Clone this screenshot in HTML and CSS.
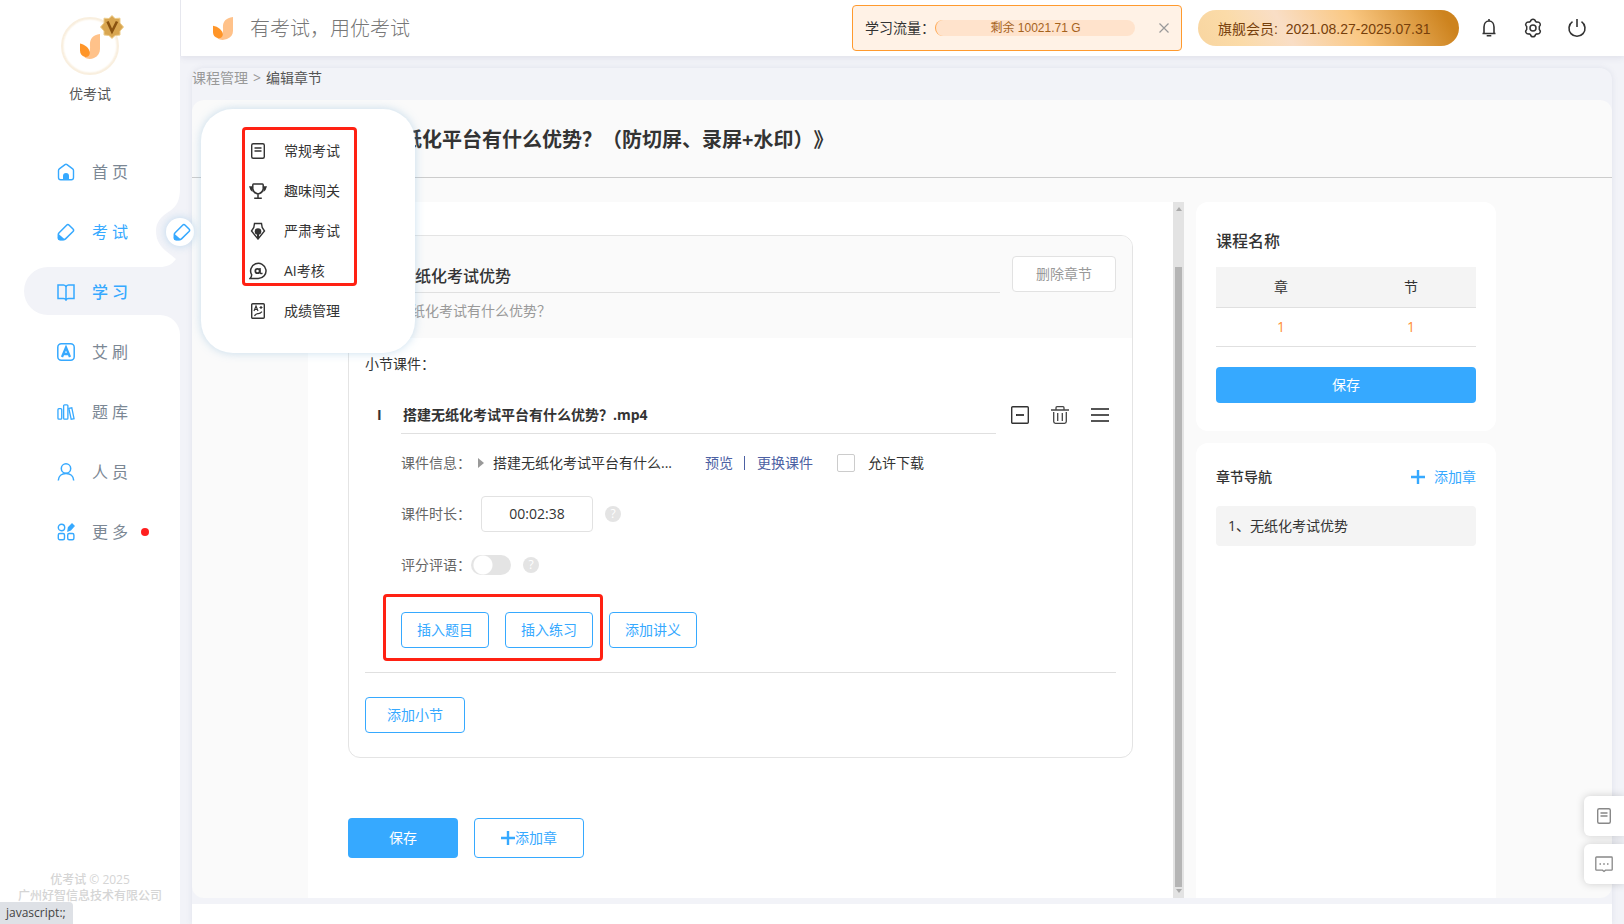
FILE: index.html
```html
<!DOCTYPE html>
<html lang="zh-CN">
<head>
<meta charset="utf-8">
<title>编辑章节 - 优考试</title>
<meta name="viewport" content="width=device-width, initial-scale=1">
<link rel="stylesheet" href="styles.css">
</head>
<body>
<svg class="defs" width="0" height="0" aria-hidden="true">
  <symbol id="i-logo" viewBox="0 0 20 25">
    <path d="M20 0C12 1 9.500 6 10 12C10.500 17 8.500 21 4.500 23.500C7 25.200 11 25.300 14 24C18 22.300 20 19 20 15Z" fill="#ffc28a"/>
    <path d="M0 9.500C5 10.500 9.500 14 9.800 19C9.800 21.500 7.500 23.500 5 23C1.500 22 0 19.500 0 16.500Z" fill="#ff9528"/>
  </symbol>
  <symbol id="i-eraser" viewBox="0 0 18 18">
    <path d="M9.600 2.200Q10.900 .9 12.200 2.200L16 6Q17.200 7.200 16 8.500L8.500 15.900Q7.700 16.700 6.300 16.700H3.200Q1.300 16.700 1.300 14.500V11.600Q1.300 10.500 2.100 9.700Z" fill="none" stroke="#36a9ff" stroke-width="1.500"/>
    <path d="M1.300 10.800L8 16.500Q7.500 17.200 6 17.200H3Q.8 17.200 .8 15Z" fill="#36a9ff"/>
  </symbol>
  <symbol id="i-doc" viewBox="0 0 18 18" fill="none" stroke="currentColor">
    <rect x="2.700" y="1.700" width="12.600" height="14.600" rx="1.500" stroke-width="1.400"/>
    <path d="M5.500 6H12.500M5.500 9H12.500" stroke-width="1.300"/>
  </symbol>
  <symbol id="i-plus" viewBox="0 0 14 14">
    <path d="M7 0V14M0 7H14" stroke="#36a9ff" stroke-width="2.400"/>
  </symbol>
</svg>

<div class="shell">
  <aside class="sidebar">
    <svg class="notch" width="158" height="152" viewBox="24 188 158 152" aria-hidden="true">
      <path d="M182 188H180C180 200 177 206 170 211C160 217 156 223 156 231C156 240 160 246 166 251L176 259C172 265 166 267 160 267H48A24 24 0 0 0 48 315H160A20 20 0 0 1 180 335V340H182Z" fill="#f2f3f8"/>
    </svg>
    <div class="avatar">
      <svg width="20" height="25"><use href="#i-logo"/></svg>
      <svg class="badge" width="24" height="24" viewBox="0 0 24 24" aria-hidden="true">
        <path d="M12 .5L15 3.500L20 3.200L20 8L23.500 12L20 16L20 20L15 20.500L12 23.500L9 20.500L4 20L4 16L.5 12L4 8L4 3.200L9 3.500Z" fill="#d9a650" stroke="#edcd8c"/>
        <path d="M7.500 6.500L12 16.500L17 6.500" fill="none" stroke="#8a5310" stroke-width="2.600"/>
      </svg>
    </div>
    <div class="username">优考试</div>
    <nav class="nav">
      <a href="#"><svg width="18" height="18" viewBox="0 0 18 18"><path d="M1.500 7.500Q1.500 6.500 2.300 5.900L8 1.600Q9 .9 10 1.600L15.700 5.900Q16.500 6.500 16.500 7.500V14.500Q16.500 16.700 14.300 16.700H3.700Q1.500 16.700 1.500 14.500Z" fill="none" stroke="#36a9ff" stroke-width="1.400"/><path d="M6 17V13A3 3 0 0 1 12 13V17Z" fill="#36a9ff"/></svg>首页</a>
      <a href="#" class="on"><svg width="18" height="18"><use href="#i-eraser"/></svg>考试</a>
      <a href="#" class="on current"><svg width="18" height="18" viewBox="0 0 18 18" fill="none" stroke="#36a9ff" stroke-width="1.500"><path d="M9 4Q8.500 2 6.500 2H1V15.500H6.500Q8.500 15.500 9 17Q9.500 15.500 11.500 15.500H17V2H11.500Q9.500 2 9 4V16.500"/></svg>学习</a>
      <a href="#"><svg width="18" height="18" viewBox="0 0 18 18"><rect x=".8" y=".8" width="16.400" height="16.400" rx="3.500" fill="none" stroke="#36a9ff" stroke-width="1.500"/><path d="M5 14L9 4.500L13 14M6.500 11H11.500" fill="none" stroke="#36a9ff" stroke-width="2.300"/></svg>艾刷</a>
      <a href="#"><svg width="19" height="18" viewBox="0 0 19 18" fill="none" stroke="#36a9ff" stroke-width="1.400"><rect x="1" y="5.500" width="4" height="11" rx="1"/><rect x="7" y="1.500" width="4.500" height="15" rx="1"/><path d="M12.500 5.200L15.600 4.500L18 16L15 16.700Z"/></svg>题库</a>
      <a href="#"><svg width="18" height="18" viewBox="0 0 18 18" fill="none" stroke="#36a9ff" stroke-width="1.500"><circle cx="9" cy="5.500" r="4.700"/><path d="M1.300 17.500C1.500 13 4.800 10.500 9 10.500S16.500 13 16.700 17.500"/></svg>人员</a>
      <a href="#"><svg width="18" height="18" viewBox="0 0 18 18" fill="none" stroke="#36a9ff" stroke-width="1.400"><circle cx="4.500" cy="4.500" r="3.200"/><rect x="1.300" y="10.500" width="6.200" height="6.200" rx="1.500"/><rect x="10.700" y="10.500" width="6.200" height="6.200" rx="1.500"/><path d="M11 7.800L11.500 4.500L15 1L17 3L13.500 6.800Z" fill="#36a9ff"/></svg>更多<i class="dot"></i></a>
    </nav>
    <div class="copyright">优考试 © 2025<br>广州好智信息技术有限公司</div>
  </aside>

  <div class="main">
    <header class="topbar">
      <svg class="topbar-logo" width="20" height="23" viewBox="0 0 20 25" preserveAspectRatio="none"><use href="#i-logo"/></svg>
      <span class="slogan">有考试，用优考试</span>
      <div class="traffic">
        <span>学习流量：</span>
        <span class="meter">剩余 10021.71 G</span>
        <button class="close" aria-label="关闭"><svg width="10" height="10" viewBox="0 0 10 10"><path d="M.5 .5L9.500 9.500M9.500 .5L.5 9.500" stroke="#999" stroke-width="1.200"/></svg></button>
      </div>
      <div class="vip">旗舰会员:&nbsp; 2021.08.27-2025.07.31</div>
      <div class="tools">
        <button aria-label="通知"><svg width="20" height="20" viewBox="0 0 20 20" fill="none" stroke="#333" stroke-width="1.600"><path d="M10 1V3M3.500 15.500H16.500M5 15.500V9C5 5.500 7 3 10 3S15 5.500 15 9V15.500M7.700 17.700H12.300" /></svg></button>
        <button aria-label="设置"><svg width="20" height="20" viewBox="0 0 20 20" fill="none" stroke="#333" stroke-width="1.500" stroke-linejoin="round"><path d="M7.400 3.500Q8 1.200 10 1.200T12.600 3.500L13.800 4.200Q16 3.700 17 5.300T16.300 8.600V11.400Q18 13.100 17 14.700T13.800 15.800L12.600 16.500Q12 18.800 10 18.800T7.400 16.500L6.200 15.800Q4 16.300 3 14.700T3.700 11.400V8.600Q2 6.900 3 5.300T6.200 4.200Z"/><circle cx="10" cy="10" r="3"/></svg></button>
        <button aria-label="退出"><svg width="20" height="20" viewBox="0 0 20 20" fill="none" stroke="#333" stroke-width="1.600"><path d="M5.500 3.700A8 8 0 1 0 14.500 3.700M10 1V9"/></svg></button>
      </div>
    </header>

    <div class="page">
      <div class="crumbs"><a href="#">课程管理</a><span>&gt;</span><b>编辑章节</b></div>
      <div class="panel">
        <h1 class="title">《搭建无纸化平台有什么优势？（防切屏、录屏+水印）》</h1>
        <div class="columns">
          <main class="scroller">
            <section class="chapter">
              <div class="chapter-head">
                <div class="chapter-row">
                  <h2 class="chapter-name">无纸化考试优势</h2>
                  <button class="btn-plain">删除章节</button>
                </div>
                <p class="chapter-desc">无纸化考试有什么优势？</p>
              </div>
              <div class="chapter-body">
                <div class="label-line">小节课件：</div>
                <div class="lesson-row">
                  <span class="index">I</span>
                  <h3 class="lesson-name">搭建无纸化考试平台有什么优势？.mp4</h3>
                  <div class="lesson-tools">
                    <button aria-label="收起"><svg width="18" height="18" viewBox="0 0 18 18"><rect x=".7" y=".7" width="16.600" height="16.600" rx="1" fill="none" stroke="#333" stroke-width="1.400"/><path d="M5 9H13" stroke="#333" stroke-width="1.800"/></svg></button>
                    <button aria-label="删除"><svg width="18" height="18" viewBox="0 0 18 18" fill="none" stroke="#444" stroke-width="1.300"><path d="M0 4H18M5 4V1.700Q5 .7 6 .7H12Q13 .7 13 1.700V4M2.700 6V15.500Q2.700 17.300 4.500 17.300H13.500Q15.300 17.300 15.300 15.500V6M6.700 7V15M11.300 7V15"/></svg></button>
                    <button aria-label="排序"><svg width="18" height="18" viewBox="0 0 18 18"><path d="M0 3H18M0 9H18M0 15H18" stroke="#555" stroke-width="1.800"/></svg></button>
                  </div>
                </div>
                <div class="fields">
                  <div class="field">
                    <span>课件信息：</span><i class="tri"></i><span class="file">搭建无纸化考试平台有什么...</span>
                    <a href="#" class="preview">预览</a><i class="bar"></i><a href="#">更换课件</a>
                    <label class="allow"><input type="checkbox" class="check">允许下载</label>
                  </div>
                  <div class="field">
                    <label for="dur">课件时长：</label><input id="dur" class="duration" type="text" value="00:02:38"><i class="help">?</i>
                  </div>
                  <div class="field">
                    <label for="cmt">评分评语：</label><input id="cmt" class="switch" type="checkbox"><i class="help">?</i>
                  </div>
                  <div class="inserts">
                    <i class="mark mark-inserts"></i>
                    <button class="btn-line">插入题目</button>
                    <button class="btn-line">插入练习</button>
                    <button class="btn-line">添加讲义</button>
                  </div>
                </div>
                <div class="chapter-foot"><button class="btn-line wide">添加小节</button></div>
              </div>
            </section>
            <div class="actions">
              <button class="btn-fill">保存</button>
              <button class="btn-line big"><svg width="14" height="14"><use href="#i-plus"/></svg>添加章</button>
            </div>
          </main>
          <div class="track" aria-hidden="true"><i class="arrow up"></i><i class="thumb"></i><i class="arrow down"></i></div>
          <aside class="side">
            <section class="box">
              <h2 class="box-title">课程名称</h2>
              <table class="stats">
                <thead><tr><th>章</th><th>节</th></tr></thead>
                <tbody><tr><td>1</td><td>1</td></tr></tbody>
              </table>
              <button class="btn-fill full">保存</button>
            </section>
            <section class="box outline">
              <div class="outline-head"><h2>章节导航</h2><a href="#"><svg width="14" height="14"><use href="#i-plus"/></svg>添加章</a></div>
              <a href="#" class="outline-item">1、无纸化考试优势</a>
            </section>
          </aside>
        </div>
      </div>
      <div class="below"></div>
    </div>
  </div>
</div>

<div class="knob"><svg width="18" height="18"><use href="#i-eraser"/></svg></div>
<div class="submenu">
  <i class="mark mark-menu"></i>
  <a href="#"><svg width="18" height="18"><use href="#i-doc"/></svg>常规考试</a>
  <a href="#"><svg width="18" height="18" viewBox="0 0 18 18"><path d="M4.500 2H13.500Q14.200 2 14.200 3V7Q13.500 11 9 12Q4.500 11 3.800 7V3Q3.800 2 4.500 2ZM9 12V15.700M5.200 16.300H12.800" fill="none" stroke="#333" stroke-width="1.500"/><path d="M0 4.200H3.500V10Q1 8.500 0 4.200ZM18 4.200H14.500V10Q17 8.500 18 4.200Z" fill="#333"/></svg>趣味闯关</a>
  <a href="#"><svg width="18" height="18" viewBox="0 0 18 18"><path d="M5.500 1.500H12.500L13.200 5.500L15.500 9L9 17L2.500 9L4.800 5.500Z" fill="none" stroke="#333" stroke-width="1.400"/><circle cx="9" cy="9.500" r="3.300" fill="#333"/><path d="M9 10V17" stroke="#333" stroke-width="2"/></svg>严肃考试</a>
  <a href="#"><svg width="18" height="18" viewBox="0 0 18 18" fill="none" stroke="#333" stroke-width="1.500"><path d="M1 16.500H9.300A7.700 7.600 0 1 0 2.700 12.800Q2.700 15 1 16.500Z"/><circle cx="8.500" cy="9" r="2.200" stroke-width="1.800"/><path d="M11 6V10.500Q11.500 12 13.500 11.300" /></svg>AI考核</a>
  <a href="#"><svg width="18" height="18" viewBox="0 0 18 18" fill="none" stroke="#333"><rect x="2.700" y="1.700" width="12.600" height="14.600" rx="1" stroke-width="1.400"/><path d="M5 9L7 4L9 9M5.700 7.500H8.300M10.500 5.500H13.500M12 4V7M5.500 14Q7 11.500 9 11.700T13 9.700" stroke-width="1.200"/></svg>成绩管理</a>
</div>

<div class="floaters">
  <button aria-label="文档"><svg width="18" height="18"><use href="#i-doc"/></svg></button>
  <button aria-label="反馈"><svg width="18" height="18" viewBox="0 0 18 18" fill="none" stroke="currentColor" stroke-width="1.300"><path d="M1.500 2H16.500Q17.200 2 17.200 2.700V14.500Q17.200 15.200 16.500 15.200H10.500L9 16.500L7.500 15.200H1.500Q.8 15.200 .8 14.500V2.700Q.8 2 1.500 2Z"/><path d="M4.500 9H6M8.200 9H9.800M12 9H13.500" stroke-width="1.600"/></svg></button>
</div>
<div class="status">javascript:;</div>
</body>
</html>
```

FILE: styles.css
```css
* { box-sizing: border-box; }
html, body { margin: 0; }
body {
  font: 14px/20px "Open Sans", "Noto Sans CJK SC", sans-serif;
  color: #333;
  background: #f2f3f8;
  text-spacing-trim: space-all;
}
h1, h2, h3, p { margin: 0; font-size: 14px; }
a { color: inherit; text-decoration: none; }
button { font: inherit; color: inherit; padding: 0; border: 0; background: none; cursor: pointer; }
svg { display: block; flex: none; }
i { font-style: normal; }
.defs { position: absolute; }

.shell { display: flex; min-height: 100vh; }

/* sidebar */
.sidebar {
  position: relative;
  flex: 0 0 180px;
  display: flex;
  flex-direction: column;
  align-items: center;
  padding: 17px 0 20px;
  background: #fff;
}
.notch { position: absolute; left: 24px; top: 188px; }
.avatar {
  position: relative;
  display: flex;
  align-items: center;
  justify-content: center;
  width: 58px;
  height: 58px;
  border: 2px solid #f9efdf;
  border-radius: 50%;
  box-shadow: inset 0 0 2px #f5e2c4;
}
.badge { position: absolute; right: -7px; top: -4px; }
.username { margin-top: 9px; color: #555; }
.nav { position: relative; width: 100%; margin-top: 38px; }
.nav a {
  display: flex;
  align-items: center;
  gap: 17px;
  height: 60px;
  padding-left: 57px;
  font-size: 16px;
  letter-spacing: 4px;
  color: #7b8794;
}
.nav a.on { color: #36a9ff; }
.nav a.current { font-weight: 500; }
.nav svg { width: 18px; }
.dot { width: 8px; height: 8px; margin-left: -8px; border-radius: 50%; background: #ff1f1f; }
.copyright {
  margin-top: auto;
  font-size: 12px;
  line-height: 16px;
  font-weight: 500;
  text-align: center;
  color: #d5d5d5;
}

/* top bar */
.main { flex: 1; min-width: 0; display: flex; flex-direction: column; }
.topbar {
  display: flex;
  align-items: center;
  height: 56px;
  padding: 0 37px 0 32px;
  background: #fff;
  border-left: 1px solid #e6e7ee;
  box-shadow: 0 2px 6px rgba(100, 100, 140, .12);
}
.slogan { margin-left: 17px; padding-top: 2px; font-size: 20px; font-weight: 300; line-height: 28px; color: #777; }
.traffic {
  display: flex;
  align-items: center;
  width: 330px;
  height: 46px;
  margin-left: auto;
  padding: 0 12px;
  border: 1px solid #ff9a2e;
  border-radius: 4px;
  background: #fff2e6;
}
.meter {
  flex: none;
  width: 200px;
  height: 16px;
  border-radius: 8px;
  border-left: 1px solid #ffa64d;
  background: #ffe3cc;
  font: 12px/16px "Liberation Sans", "Noto Sans CJK SC", sans-serif;
  text-align: center;
  color: #a5621c;
}
.close { margin-left: auto; }
.vip {
  flex: none;
  width: 261px;
  height: 36px;
  margin-left: 16px;
  padding: 1px 0 0 20px;
  border-radius: 18px;
  background: linear-gradient(60deg, #f8d5a0, #fbdba8 16%, #f9dec6 34%, #fac883 60%, #cd831e 94%);
  font: 14px/36px "Liberation Sans", "Noto Sans CJK SC", sans-serif;
  color: #77400b;
}
.tools { display: flex; gap: 24px; margin-left: 20px; }

/* page */
.page { flex: 1; display: flex; flex-direction: column; margin: 12px 12px 0; border-radius: 12px 12px 0 0; box-shadow: 0 0 6px rgba(100, 110, 150, .13); }
.crumbs { display: flex; gap: 5px; height: 32px; color: #999; }
.crumbs b { font-weight: 400; color: #555; }
.panel { flex: 1; display: flex; flex-direction: column; border-radius: 12px; background: #fafafa; }
.title {
  padding: 25px 16px 22px 130px;
  border-bottom: 1px solid #ccc;
  font-size: 20px;
  line-height: 30px;
}
.columns { flex: 1; display: flex; width: 100%; max-width: 1188px; margin: 0 auto; padding-top: 24px; }
.scroller { flex: 1; min-width: 0; padding: 33px 40px 40px; background: #fff; }
.below { height: 20px; margin-top: 6px; background: #fff; }

.chapter { border: 1px solid #e4e4e4; border-radius: 12px; overflow: hidden; }
.chapter-head { height: 102px; padding: 20px 16px 0 15px; background: #fafafa; }
.chapter-row { display: flex; gap: 12px; }
.chapter-name {
  flex: 1;
  padding: 8px 0 4px 35px;
  border-bottom: 1px solid #e0e0e0;
  font-size: 16px;
  line-height: 24px;
  font-weight: 500;
}
.chapter-desc { padding: 8px 0 0 33px; font-weight: 400; color: #999; }
.btn-plain { width: 104px; height: 36px; border: 1px solid #e2e2e2; border-radius: 4px; background: #fff; color: #999; }
.chapter-body { padding: 16px 16px 24px; }
.lesson-row { display: flex; margin-top: 24px; }
.index { width: 36px; padding: 7px 0 0 12px; font-weight: 700; }
.lesson-name { flex: 1; padding: 7px 2px 8px; border-bottom: 1px solid #e0e0e0; font-weight: 700; }
.lesson-tools { display: flex; gap: 22px; align-items: center; margin: 0 7px 2px 15px; }
.fields { padding: 11px 0 24px 36px; border-bottom: 1px solid #e0e0e0; }
.field { display: flex; align-items: center; height: 36px; margin-bottom: 15px; color: #666; }
.field a { color: #4c61a3; }
.tri { margin-left: 7px; border: 5px solid transparent; border-left: 6px solid #999; border-right: 0; }
.file { margin-left: 9px; color: #333; }
.field .preview { margin-left: 33px; }
.bar { width: 1px; height: 14px; margin: 0 12px 0 11px; background: #4c61a3; }
.allow { display: flex; align-items: center; margin-left: 24px; color: #333; }
.check { appearance: none; width: 18px; height: 18px; margin: 0 13px 0 0; border: 1px solid #ccc; border-radius: 2px; background: #fff; }
.duration {
  width: 112px;
  height: 36px;
  margin: 0 0 0 10px;
  padding: 0 2px 2px;
  border: 1px solid #e2e2e2;
  border-radius: 4px;
  font: inherit;
  color: #333;
  text-align: center;
}
.help {
  width: 16px;
  height: 16px;
  margin-left: 12px;
  border-radius: 50%;
  background: #e4e4e4;
  font-size: 12px;
  line-height: 16px;
  text-align: center;
  color: #fff;
}
.duration + .help { margin-left: 12px; }
.switch {
  appearance: none;
  width: 40px;
  height: 20px;
  margin: 0;
  border-radius: 10px;
  background: radial-gradient(circle at 12px 10px, #fff 9px, #e4e4e4 10px);
}
.inserts { position: relative; display: flex; gap: 16px; padding-top: 14px; }
.btn-line {
  display: flex;
  align-items: center;
  justify-content: center;
  width: 88px;
  height: 36px;
  border: 1px solid #36a9ff;
  border-radius: 4px;
  background: #fff;
  color: #36a9ff;
}
.btn-line.wide { width: 100px; }
.btn-line.big { width: 110px; height: 40px; }
.btn-fill { width: 110px; height: 40px; border-radius: 4px; background: #36a9ff; color: #fff; }
.btn-fill.full { width: 100%; height: 36px; }
.chapter-foot { padding-top: 24px; }
.actions { display: flex; gap: 16px; margin-top: 60px; }

.mark { position: absolute; border: 3px solid #ff2113; border-radius: 4px; pointer-events: none; }
.mark-inserts { left: -18px; top: -4px; width: 220px; height: 67px; }
.mark-menu { left: 41px; top: 18px; width: 115px; height: 159px; }

.track { display: flex; flex-direction: column; align-items: center; width: 11px; padding: 5px 0; background: #e3e3e3; }
.arrow { border: 3px solid transparent; }
.up { border-top: 0; border-bottom: 4px solid #aaa; }
.down { border-bottom: 0; border-top: 4px solid #aaa; }
.thumb { flex: 1; width: 7px; margin: 56px 0 2px; background: #b5b5b5; }

/* right column */
.side { display: flex; flex-direction: column; gap: 12px; width: 300px; margin-left: 12px; }
.box { padding: 28px 20px; border-radius: 12px; background: #fff; }
.box-title { margin-bottom: 14px; font-size: 16px; font-weight: 500; line-height: 23px; }
.stats { width: 100%; margin-bottom: 20px; border-collapse: collapse; table-layout: fixed; }
.stats th, .stats td { height: 40px; padding: 0; border-bottom: 1px solid #e0e0e0; text-align: center; font-weight: 400; }
.stats th { background: #f4f4f4; }
.stats td { height: 39px; color: #ff8f33; }
.outline { flex: 1; padding-top: 24px; border-radius: 12px 12px 0 0; }
.outline-head { display: flex; justify-content: space-between; color: #36a9ff; }
.outline-head h2 { font-weight: 500; color: #333; }
.outline-head a { display: flex; align-items: center; gap: 9px; }
.outline-item { display: block; margin-top: 19px; padding: 10px 12px; border-radius: 4px; background: #f4f4f4; }

/* overlays */
.knob {
  position: absolute;
  left: 166px;
  top: 218px;
  display: flex;
  align-items: center;
  justify-content: center;
  width: 28px;
  height: 28px;
  padding-left: 3px;
  border-radius: 50%;
  background: #fff;
  box-shadow: 0 0 9px rgba(120, 180, 225, .45);
}
.submenu {
  position: absolute;
  left: 201px;
  top: 109px;
  width: 214px;
  padding: 22px 0;
  border-radius: 32px;
  background: #fff;
  box-shadow: 0 0 10px rgba(120, 175, 215, .4);
}
.submenu a { display: flex; align-items: center; gap: 17px; height: 40px; padding-left: 48px; }
.floaters { position: fixed; right: 0; bottom: 40px; display: grid; gap: 8px; }
.floaters button {
  display: flex;
  align-items: center;
  justify-content: center;
  width: 40px;
  height: 40px;
  border-radius: 6px 0 0 6px;
  background: #fff;
  color: #888;
  box-shadow: 0 0 8px rgba(0, 0, 0, .18);
}
.status {
  position: fixed;
  left: 0;
  bottom: 0;
  padding: 1px 7px 1px 6px;
  border-radius: 0 4px 0 0;
  background: #dee1e6;
  font: 12px/20px "Open Sans", sans-serif;
  color: #444;
}
```
